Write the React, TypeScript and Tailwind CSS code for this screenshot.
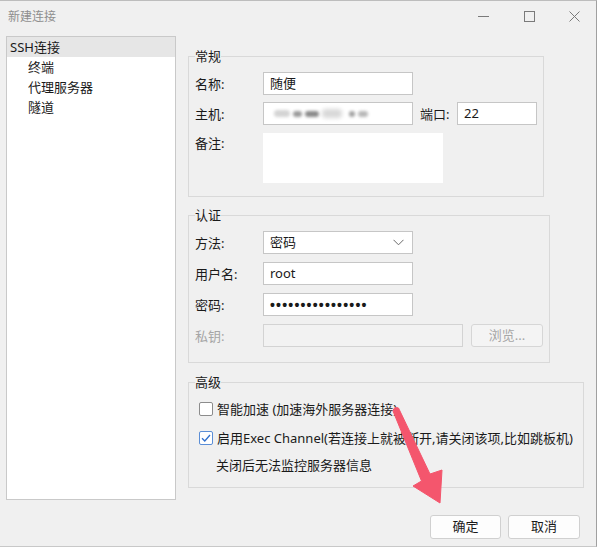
import React from "react";

const font = { fontFamily: '"Noto Sans", "Noto Sans CJK SC", sans-serif' };

function Label({ children, w = "w-[68px]", dim = false }: { children: React.ReactNode; w?: string; dim?: boolean }) {
  return (
    <div className={`${w} shrink-0 text-[13px] leading-[18px] ${dim ? "text-[#a6a6a6]" : "text-[#1a1a1a]"}`}>{children}</div>
  );
}

function Box({ children, className = "" }: { children?: React.ReactNode; className?: string }) {
  return (
    <div className={`h-[23px] flex items-center bg-white border border-[#c6c6c6] pl-[6px] text-[13px] text-[#1a1a1a] ${className}`}>
      {children}
    </div>
  );
}

function Group({ title, className, children }: { title: string; className: string; children: React.ReactNode }) {
  return (
    <fieldset className={`border border-[#d9d9d9] pl-[6px] ${className}`}>
      <legend className="px-0 text-[13px] leading-[18px] text-[#1a1a1a]">{title}</legend>
      {children}
    </fieldset>
  );
}

export default function App() {
  return (
    <div
      className="relative w-[597px] h-[547px] bg-[#f0f0f0] border-t border-r border-b border-t-[#bdbdbd] border-r-[#a0a0a0] border-b-[#c8c8c8] overflow-hidden"
      style={font}
    >
      {/* Title bar */}
      <div className="flex h-[31px] items-center">
        <div className="pl-[8px] text-[12px] leading-[18px] text-[#8e8e8e]">新建连接</div>
        <div className="ml-auto flex h-full">
          <div className="w-[46px] flex items-center justify-center">
            <svg width="11" height="11" viewBox="0 0 11 11">
              <line x1="0" y1="5.5" x2="11" y2="5.5" stroke="#7a7a7a" strokeWidth="1" />
            </svg>
          </div>
          <div className="w-[46px] flex items-center justify-center">
            <svg width="11" height="11" viewBox="0 0 11 11">
              <rect x="0.5" y="0.5" width="10" height="10" fill="none" stroke="#7a7a7a" strokeWidth="1" />
            </svg>
          </div>
          <div className="w-[44px] flex items-center justify-center">
            <svg width="11" height="11" viewBox="0 0 11 11">
              <path d="M0.5 0.5 L10.5 10.5 M10.5 0.5 L0.5 10.5" stroke="#7a7a7a" strokeWidth="1" />
            </svg>
          </div>
        </div>
      </div>

      {/* Main */}
      <div className="flex items-start pl-[6px]">
        {/* Tree */}
        <div className="mt-[4px] w-[170px] h-[464px] bg-white border border-[#c9c9c9] text-[13px] text-[#1a1a1a]">
          <div className="h-[20px] leading-[20px] bg-[#e6e6e6] pl-[3px]">SSH连接</div>
          <div className="h-[20px] leading-[20px] pl-[21px]">终端</div>
          <div className="h-[20px] leading-[20px] pl-[21px]">代理服务器</div>
          <div className="h-[20px] leading-[20px] pl-[21px]">隧道</div>
        </div>

        {/* Right column */}
        <div className="ml-[12px] mt-[15px] flex flex-col items-start">
          <Group title="常规" className="w-[356px] pt-[7px] pb-[13px]">
            <div className="flex items-center h-[23px]">
              <Label>名称:</Label>
              <Box className="w-[150px]">随便</Box>
            </div>
            <div className="flex items-center h-[23px] mt-[7px]">
              <Label>主机:</Label>
              <Box className="w-[150px] gap-[3px] pl-[10px]">
                <span className="w-[16px] h-[7px] bg-[#d4d4d4] blur-[1.5px] rounded-sm" />
                <span className="w-[9px] h-[6px] bg-[#9a9a9a] blur-[1.5px] rounded-sm" />
                <span className="w-[14px] h-[6px] bg-[#8a8a8a] blur-[1.5px] rounded-sm" />
                <span className="w-[20px] h-[9px] bg-[#d8d8d8] blur-[2px] rounded-sm" />
                <span className="w-[6px] h-[6px] bg-[#a0a0a0] blur-[1.5px] rounded-sm ml-[4px]" />
                <span className="w-[10px] h-[6px] bg-[#b8b8b8] blur-[1.5px] rounded-sm" />
              </Box>
              <Label w="w-[37px] ml-[7px]">端口:</Label>
              <Box className="w-[80px]">22</Box>
            </div>
            <div className="flex items-start mt-[8px]">
              <div className="pt-[1px]">
                <Label>备注:</Label>
              </div>
              <div className="w-[180px] h-[50px] bg-white" />
            </div>
          </Group>

          <Group title="认证" className="mt-[9px] w-[362px] pt-[7px] pb-[15px]">
            <div className="flex items-center h-[23px]">
              <Label>方法:</Label>
              <Box className="w-[150px] pr-[8px] justify-between">
                <span>密码</span>
                <svg width="11" height="7" viewBox="0 0 11 7">
                  <path d="M0.5 0.8 L5.5 5.8 L10.5 0.8" fill="none" stroke="#6a6a6a" strokeWidth="1" />
                </svg>
              </Box>
            </div>
            <div className="flex items-center h-[23px] mt-[8px]">
              <Label>用户名:</Label>
              <Box className="w-[150px]">root</Box>
            </div>
            <div className="flex items-center h-[23px] mt-[8px]">
              <Label>密码:</Label>
              <Box className="w-[150px]">
                <span
                  className="text-[14px] font-bold tracking-[1.2px] leading-[14px]"
                  style={{ fontFamily: '"Liberation Sans", sans-serif' }}
                >
                  ••••••••••••••••
                </span>
              </Box>
            </div>
            <div className="flex items-center h-[23px] mt-[8px]">
              <Label dim>私钥:</Label>
              <div className="w-[200px] h-[23px] bg-[#f2f2f2] border border-[#d3d3d3]" />
              <div className="ml-[8px] w-[72px] h-[23px] flex items-center justify-center rounded-[3px] bg-[#f4f4f4] border border-[#d6d6d6] text-[13px] text-[#a6a6a6]">
                浏览...
              </div>
            </div>
          </Group>

          <Group title="高级" className="mt-[10px] w-[396px] pt-[8px] pb-[12px]">
            <div className="flex items-center h-[20px] pl-[4px]">
              <div className="w-[14px] h-[14px] bg-white border border-[#8c8c8c] rounded-[2px]" />
              <span className="ml-[4px] text-[13px] leading-[18px] text-[#1a1a1a]">智能加速 (加速海外服务器连接)</span>
            </div>
            <div className="flex items-center h-[20px] pl-[4px] mt-[9px]">
              <div className="w-[14px] h-[14px] bg-white border border-[#5b8ed6] rounded-[2px] flex items-center justify-center">
                <svg width="10" height="8" viewBox="0 0 10 8">
                  <path d="M1 4.2 L3.8 7 L9 1" fill="none" stroke="#2f6fce" strokeWidth="1.3" />
                </svg>
              </div>
              <span className="ml-[4px] text-[13px] leading-[18px] text-[#1a1a1a]">
                启用Exec Channel(若连接上就被断开,请关闭该项,比如跳板机)
              </span>
            </div>
            <div className="h-[20px] flex items-center pl-[21px] mt-[7px] text-[13px] leading-[18px] text-[#1a1a1a]">
              关闭后无法监控服务器信息
            </div>
          </Group>
        </div>
      </div>

      {/* Footer buttons */}
      <div className="flex justify-end gap-[7px] pr-[16px] mt-[15px]">
        <div className="w-[71px] h-[24px] flex items-center justify-center rounded-[3px] bg-[#fdfdfd] border border-[#d0d0d0] text-[13px] text-[#1a1a1a]">
          确定
        </div>
        <div className="w-[72px] h-[24px] flex items-center justify-center rounded-[3px] bg-[#fdfdfd] border border-[#d0d0d0] text-[13px] text-[#1a1a1a]">
          取消
        </div>
      </div>

      {/* Annotation arrow overlay */}
      <svg className="absolute left-0 top-0 pointer-events-none" width="597" height="547" viewBox="0 0 597 547">
        <path
          d="M393 410 Q394 405 398.5 407 L430 473 L442 469 L440 502 L413 485 L421.5 480 Z"
          fill="#f4566d"
          stroke="#f4566d"
          strokeWidth="1"
          strokeLinejoin="round"
        />
      </svg>
    </div>
  );
}
